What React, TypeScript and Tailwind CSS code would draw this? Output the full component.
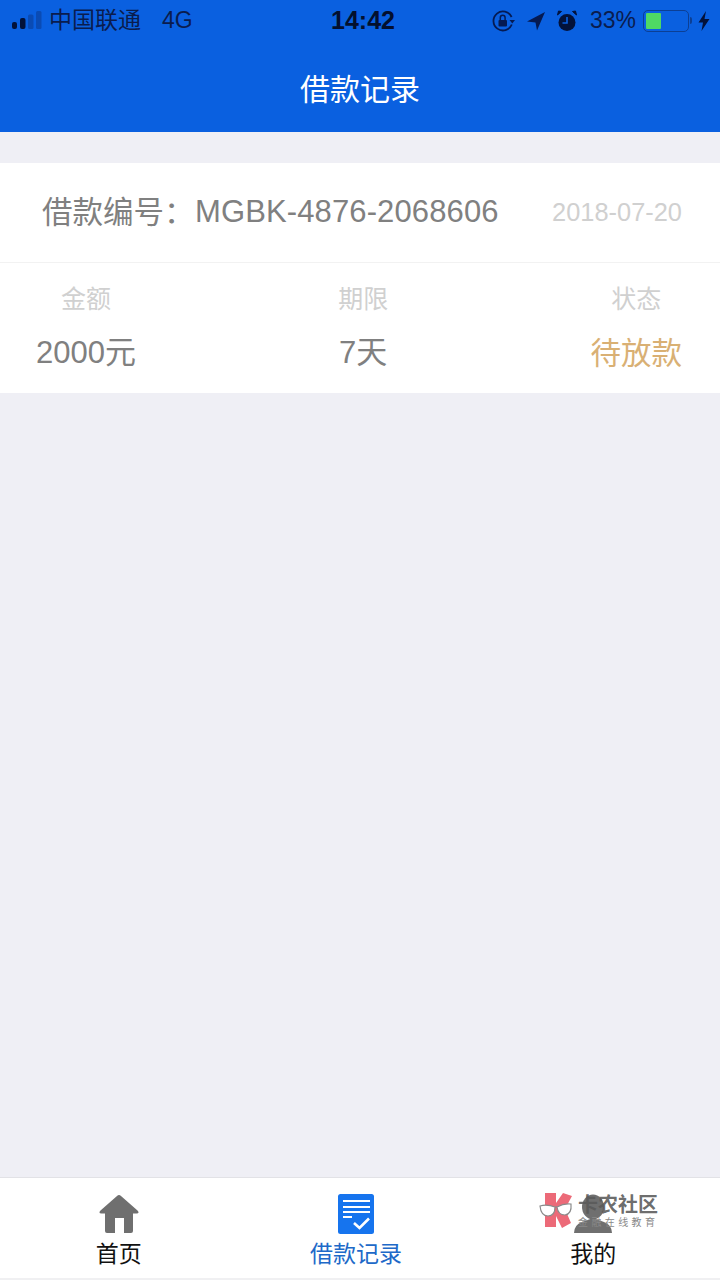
const FONT = "font-['Liberation_Sans','Noto_Sans_CJK_SC',sans-serif]";

function StatusBar() {
  return (
    <div className="flex h-[40px] items-center pt-[1px] text-[23px] text-[#0a1c4e]">
      <div className="flex flex-1 items-center pl-[12px]">
        <svg width="30" height="20" viewBox="0 0 30 20" className="mr-[7px]">
          <rect x="0" y="11" width="5" height="7" rx="2" fill="#02123a" />
          <rect x="8" y="7" width="5.5" height="11" rx="2" fill="#02123a" />
          <rect x="16" y="3.5" width="5.5" height="14.5" rx="1.5" fill="#0a4bb4" />
          <rect x="24" y="0" width="5.5" height="18" rx="1.5" fill="#0a4bb4" />
        </svg>
        <span>中国联通</span>
        <span className="ml-[21px]">4G</span>
      </div>
      <span className="absolute left-[331px] text-[25px] leading-none font-bold text-[#03102e]">14:42</span>
      <div className="flex items-center pr-[10px]">
        {/* rotation lock */}
        <svg width="24" height="24" viewBox="0 0 24 24" fill="none" className="mr-[11px]">
          <path d="M20.6 8A9.5 9.5 0 1 0 20.8 15.5" stroke="#051a52" strokeWidth="1.8" />
          <path d="M18.5 11h5.5l-2.7 3.5z" fill="#051a52" />
          <rect x="7.5" y="11" width="8.5" height="6.5" rx="1" fill="#051a52" />
          <path d="M9.3 11V8.7a2.4 2.4 0 0 1 4.8 0V11" stroke="#051a52" strokeWidth="1.5" />
        </svg>
        {/* location */}
        <svg width="20" height="20" viewBox="0 0 20 20" className="mr-[11px]">
          <path d="M19 1 L1 10.5 L9.5 11.5 L11 19.5 Z" fill="#051a52" />
        </svg>
        {/* alarm */}
        <svg width="20" height="22" viewBox="0 0 20 22" className="mr-[13px]">
          <circle cx="10" cy="12.5" r="8.5" fill="#03123a" />
          <path d="M10 7V13H5.5" stroke="#0a60e0" strokeWidth="1.6" fill="none" />
          <path d="M0.5 5 L4.5 1.5 L1.5 1 Z M19.5 5 L15.5 1.5 L18.5 1 Z" fill="#03123a" stroke="#03123a" />
        </svg>
        <span className="mr-[7px]">33%</span>
        {/* battery */}
        <div className="mr-[1px] flex h-[22px] w-[46px] items-center rounded-[5px] border-[1.5px] border-[#0c3f94] p-[2px]">
          <div className="h-full w-[15px] rounded-[1px] bg-[#4fd964]" />
        </div>
        <div className="mr-[6px] h-[7px] w-[2px] rounded-r-[2px] bg-[#0c3f94]" />
        <svg width="12" height="20" viewBox="0 0 12 20">
          <path d="M8 0 L0.5 11.5 H5 L3.5 20 L11.5 8 H6.5 Z" fill="#03123a" />
        </svg>
      </div>
    </div>
  );
}

function Stat({ label, value, valueClass }: { label: string; value: string; valueClass: string }) {
  return (
    <div className="flex flex-col items-center">
      <span className="text-[25px] leading-[30px] text-[#d0d0d0]">{label}</span>
      <span className={`mt-[21px] leading-[36px] ${valueClass}`}>{value}</span>
    </div>
  );
}

function TabLabel({ active, children }: { active?: boolean; children: string }) {
  return (
    <span className={`mt-[6px] text-[23px] leading-[28px] ${active ? 'text-[#2069c8]' : 'text-[#111111]'}`}>
      {children}
    </span>
  );
}

function Watermark() {
  return (
    <div className="absolute top-[15px] left-[541px] flex items-start">
      <svg width="36" height="36" viewBox="0 0 36 36" className="overflow-visible">
        <path d="M4 0 H15 V10 L22 0 L31 3 L24 16 L30 30 L21 35 L15 23 V34 H4 Z" fill="#ec6a78" />
        <path d="M-1 13 Q6 11 14 14 Q14 23 7 23 Q0 23 -1 13 Z" fill="#ffffff" stroke="#8a8a8a" strokeWidth="1.2" />
        <path d="M16 14 Q23 10 30 11 Q31 21 24 22 Q17 22 16 14 Z" fill="#ffffff" stroke="#8a8a8a" strokeWidth="1.2" />
        <path d="M14 14 L16 14" stroke="#8a8a8a" strokeWidth="1.2" />
      </svg>
      <div className="ml-[1px] flex flex-col">
        <span className="text-[20px] leading-[24px] font-bold whitespace-nowrap text-[#5a5a5a]/90">卡农社区</span>
        <span className="text-[10px] leading-[12px] tracking-[3.4px] whitespace-nowrap text-[#8a8a8a]">金融在线教育</span>
      </div>
    </div>
  );
}

export default function App() {
  return (
    <div className={`relative flex h-[1280px] w-[720px] flex-col overflow-hidden bg-[#efeff5] ${FONT}`}>
      {/* Header */}
      <div className="relative h-[132px] bg-[#0a60e0]">
        <StatusBar />
        <div className="mt-[32px] text-center text-[30px] leading-[36px] text-white">借款记录</div>
      </div>

      {/* Record card */}
      <div className="flex-1 pt-[31px]">
        <div className="bg-white">
          <div className="flex h-[99px] items-center justify-between pr-[38px] pl-[42px]">
            <div className="flex items-center text-[#808080]">
              <span className="text-[30.5px]">借款编号：</span>
              <span className="ml-[0.5px] text-[31px] tracking-[0.12px]">MGBK-4876-2068606</span>
            </div>
            <span className="mb-[1px] text-[25.4px] text-[#d0d0d0]">2018-07-20</span>
          </div>
          <div className="h-[1px] bg-[#f2f2f2]" />
          <div className="flex h-[130px] justify-between pt-[21px] pr-[38px] pl-[36px]">
            <Stat label="金额" value="2000元" valueClass="text-[31px] text-[#808080]" />
            <Stat label="期限" value="7天" valueClass="text-[31px] text-[#808080]" />
            <Stat label="状态" value="待放款" valueClass="text-[30.5px] text-[#d9b074]" />
          </div>
        </div>
      </div>

      {/* Tab bar */}
      <div className="relative h-[103px] border-t-[1px] border-b-[2px] border-t-[#e2e2e6] border-b-[#f0f0f2] bg-white">
        <div className="grid grid-cols-3 pt-[16px] pr-[8px]">
          <div className="flex flex-col items-center">
            <svg width="40" height="40" viewBox="0 0 40 40">
              <path d="M20 1 Q21 1 22 2 L38.5 16.5 Q41 19.5 37.5 19.5 H34 V37 Q34 39 32 39 H25 V24 H16 V39 H8 Q6 39 6 37 V19.5 H2.5 Q-1 19.5 1.5 16.5 L18 2 Q19 1 20 1 Z" fill="#6f6f6f" />
            </svg>
            <TabLabel>首页</TabLabel>
          </div>
          <div className="flex flex-col items-center">
            <svg width="38" height="40" viewBox="0 0 38 40">
              <rect x="1" y="0" width="36" height="40" rx="2.5" fill="#1674ee" />
              <path d="M6 7 H33 M6 13 H33 M6 18 H33 M6 23 H15" stroke="#ffffff" strokeWidth="2.2" fill="none" />
              <path d="M17 29 L22.5 34 L32 24.5" stroke="#ffffff" strokeWidth="2.6" fill="none" />
            </svg>
            <TabLabel active>借款记录</TabLabel>
          </div>
          <div className="flex flex-col items-center">
            <svg width="40" height="40" viewBox="0 0 40 40">
              <ellipse cx="20" cy="13" rx="11" ry="12.5" fill="#6f6f6f" />
              <path d="M1 39 Q1 31 9 28 L20 24 L31 28 Q39 31 39 39 Z" fill="#6f6f6f" />
            </svg>
            <TabLabel>我的</TabLabel>
          </div>
        </div>
        <Watermark />
      </div>
    </div>
  );
}
